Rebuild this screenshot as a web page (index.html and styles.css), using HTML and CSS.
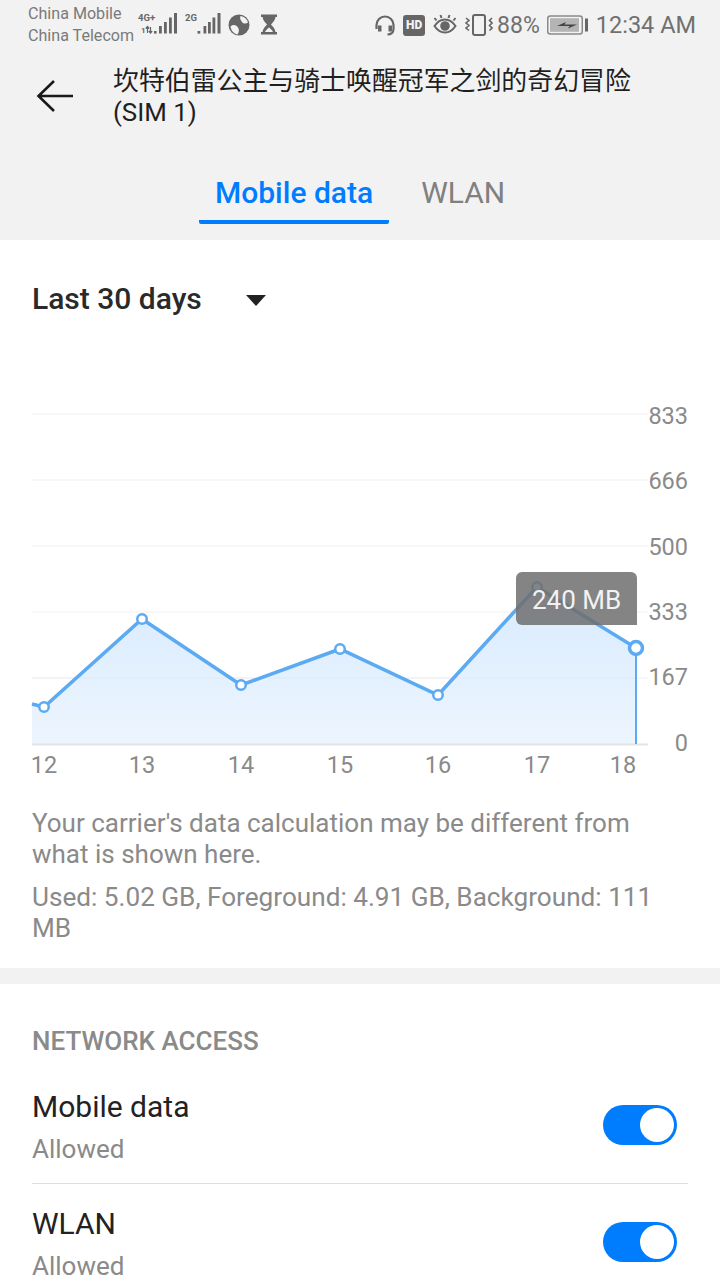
FILE: index.html
```html
<!DOCTYPE html>
<html lang="en">
<head>
<meta charset="utf-8">
<title>Data usage</title>
<link rel="stylesheet" href="styles.css">
</head>
<body>
<div class="screen">
  <header class="head">
    <div class="status">
      <div class="status-left">
        <div class="carriers"><span>China Mobile</span><span>China Telecom</span></div>
        <svg class="ic-signal" width="40" height="28" viewBox="0 0 40 28">
          <text x="0" y="11" class="sig-t">4G+</text>
          <text x="3" y="23" class="sig-t sig-s">1</text>
          <path d="M9.500 23v-6M7.800 18.500l1.700-2 1.700 2M12.500 17v6M10.800 21l1.700 2 1.700-2" fill="none" stroke="#666" stroke-width="1.200"/>
          <g fill="#666">
            <rect x="16" y="21" width="2.600" height="2.600"/><rect x="21" y="16" width="2.800" height="7.500"/><rect x="26" y="12" width="2.800" height="11.500"/><rect x="31" y="7.500" width="2.800" height="16"/><rect x="36" y="3" width="3" height="20.500"/>
          </g>
        </svg>
        <svg class="ic-signal2" width="36" height="28" viewBox="0 0 36 28">
          <text x="0" y="11" class="sig-t">2G</text>
          <g fill="#666">
            <rect x="12.500" y="21" width="2.800" height="2.600"/><rect x="18.500" y="16" width="2.800" height="7.500"/><rect x="23" y="12" width="2.800" height="11.500"/><rect x="27.500" y="7.500" width="2.800" height="16"/><rect x="32.500" y="3" width="3" height="20.500"/>
          </g>
        </svg>
        <svg class="ic-globe" width="22" height="22" viewBox="0 0 22 22">
          <circle cx="11" cy="11" r="10.500" fill="#666"/>
          <path d="M2.500 12.500c3-2.500 6-1.500 7.500 1s1 4.500-.5 7c-3.500-.5-6.500-4-7-8zM12.500 2c4 .5 6.500 3 7.500 6.500-2 1.500-4.500 1.500-6-.5s-2.500-4-1.500-6z" fill="#f2f2f2"/>
        </svg>
        <svg class="ic-glass" width="18" height="21" viewBox="0 0 18 21">
          <path d="M1 .5h16V3h-1.600c0 3-2.400 5.200-4.400 7.500 2 2.300 4.400 4.500 4.400 7.500H17v2.500H1V18h1.600c0-3 2.400-5.200 4.400-7.500C5 8.200 2.600 6 2.600 3H1z" fill="#666"/>
          <path d="M5 18h8c-.5-1.600-2.500-3-4-4.500C7.500 15 5.500 16.400 5 18z" fill="#f2f2f2"/>
        </svg>
      </div>
      <div class="status-right">
        <svg class="ic-head" width="22" height="22" viewBox="0 0 22 22" fill="none" stroke="#666" stroke-width="2.200">
          <path d="M2.500 15V11a8.500 8.500 0 0 1 17 0v4c0 3-2 5.500-6 5.500"/>
          <rect x="4.500" y="12" width="2.500" height="5" fill="#666" stroke-width="1"/><rect x="15" y="12" width="2.500" height="5" fill="#666" stroke-width="1"/>
        </svg>
        <span class="hd">HD</span>
        <svg class="ic-eye" width="24" height="20" viewBox="0 0 24 20" fill="none" stroke="#666" stroke-width="2">
          <path d="M1.500 12c3-4.500 7-6.500 10.500-6.500S19.500 7.500 22.500 12c-3 4.500-7 6.500-10.500 6.500S4.500 16.500 1.500 12z"/>
          <circle cx="12" cy="12" r="3.800" fill="#666"/>
          <path d="M3.500 6.500 1.500 4M8.500 4 7.500 1M15.500 4l1-3M20.500 6.500l2-2.500"/>
        </svg>
        <svg class="ic-vib" width="28" height="22" viewBox="0 0 28 22" fill="none" stroke="#666" stroke-width="2">
          <rect x="8" y="1" width="12" height="20" rx="2"/>
          <path d="M1 4l3 2.500-3 2.500 3 2.500-3 2.500 3 2.500M27 4l-2.500 2.500L27 9l-2.500 2.500L27 14l-2.500 2.500" stroke-width="1.600"/>
        </svg>
        <span class="pct">88%</span>
        <svg class="ic-batt" width="41" height="20" viewBox="0 0 41 20">
          <rect x=".75" y="1" width="34.500" height="18" rx="2.500" fill="#f2f2f2" stroke="#8a8a8a" stroke-width="1.500"/>
          <rect x="3" y="3.200" width="29" height="13.600" fill="#b4b4b4"/>
          <path d="M10 11l9-4-1.500 2.500H30l-9 4 1.500-2.500z" fill="#444"/>
          <rect x="38" y="3.500" width="3" height="13" fill="#666"/>
        </svg>
        <span class="time">12:34 AM</span>
      </div>
    </div>
    <div class="appbar">
      <svg class="back" width="38" height="34" viewBox="0 0 38 34" fill="none" stroke="#1a1a1a" stroke-width="2.600">
        <path d="M37 17H3M18 2 2.500 17 18 32"/>
      </svg>
      <h1 class="title">坎特伯雷公主与骑士唤醒冠军之剑的奇幻冒险 (SIM 1)</h1>
    </div>
    <nav class="tabs">
      <div class="tab active">Mobile data</div>
      <div class="tab">WLAN</div>
    </nav>
  </header>

  <section class="usage">
    <div class="range">
      <span class="range-label">Last 30 days</span>
      <span class="caret"></span>
    </div>
    <div class="chart">
      <svg class="chart-svg" width="720" height="400" viewBox="0 400 720 400">
        <defs>
          <linearGradient id="fill" x1="0" y1="0" x2="0" y2="1">
            <stop offset="0" stop-color="#d8ebfe"/>
            <stop offset="1" stop-color="#edf5fe"/>
          </linearGradient>
        </defs>
        <g stroke="#f5f5f5" stroke-width="1.500">
          <path d="M32 414H648M32 480H648M32 546H648M32 612H648M32 678H648"/>
        </g>
        <path d="M32 704 44 707 142 619 241 685 340 649 438 695 537 587 636 648V744H32z" fill="url(#fill)"/>
        <path d="M32 678H636" stroke="#000" stroke-opacity=".025" stroke-width="1.500"/>
        <path d="M32 744.500H648" stroke="#e2e4e6" stroke-width="2"/>
        <path d="M32 704 44 707 142 619 241 685 340 649 438 695 537 587 636 648" fill="none" stroke="#5caaf2" stroke-width="3.500"/>
        <path d="M636 648V744" stroke="#5caaf2" stroke-width="2"/>
        <g fill="#fff" stroke="#5caaf2" stroke-width="2.500">
          <circle cx="44" cy="707" r="4.750"/><circle cx="142" cy="619" r="4.750"/><circle cx="241" cy="685" r="4.750"/><circle cx="340" cy="649" r="4.750"/><circle cx="438" cy="695" r="4.750"/><circle cx="537" cy="587" r="4.750"/>
          <circle cx="636" cy="648" r="6.500" stroke-width="3.500"/>
        </g>
        <g class="y-labels" text-anchor="end">
          <text x="688" y="424">833</text><text x="688" y="489">666</text><text x="688" y="555">500</text><text x="688" y="620">333</text><text x="688" y="685">167</text><text x="688" y="751">0</text>
        </g>
        <g class="x-labels" text-anchor="middle">
          <text x="44" y="773">12</text><text x="142" y="773">13</text><text x="241" y="773">14</text><text x="340" y="773">15</text><text x="438" y="773">16</text><text x="537" y="773">17</text><text x="623" y="773">18</text>
        </g>
      </svg>
      <div class="tooltip">240 MB</div>
    </div>
    <p class="note">Your carrier's data calculation may be different from what is shown here.</p>
    <p class="note used">Used: 5.02 GB, Foreground: 4.91 GB, Background: 111 MB</p>
  </section>

  <div class="divider"></div>

  <section class="access">
    <h2 class="access-title">NETWORK ACCESS</h2>
    <div class="row">
      <div class="row-text"><div class="row-name">Mobile data</div><div class="row-sub">Allowed</div></div>
      <div class="switch"><span class="knob"></span></div>
    </div>
    <div class="row last">
      <div class="row-text"><div class="row-name">WLAN</div><div class="row-sub">Allowed</div></div>
      <div class="switch"><span class="knob"></span></div>
    </div>
  </section>
</div>
</body>
</html>
```
FILE: styles.css
```css
* { box-sizing: border-box; }
html, body { margin: 0; padding: 0; background: #fff; }
body { font-family: Roboto, "Noto Sans CJK SC", sans-serif; }
.screen { width: 720px; height: 1280px; overflow: hidden; }

.head { background: #f2f2f2; height: 240px; display: flex; flex-direction: column; }
.status { height: 48px; display: flex; justify-content: space-between; align-items: flex-start; padding: 3px 24px 0 28px; color: #666; }
.status-left { display: flex; align-items: flex-start; }
.carriers { display: flex; flex-direction: column; font-size: 16.100px; line-height: 22px; color: #7a7a7a; width: 110px; flex: none; }
.ic-signal { margin: 7px 0 0 0; flex: none; }
.ic-signal2 { margin: 7px 0 0 7px; flex: none; }
.ic-globe { margin: 11px 0 0 7px; flex: none; }
.ic-glass { margin: 11px 0 0 10px; flex: none; }
.sig-t { font-size: 9.500px; font-weight: 700; fill: #666; }
.sig-s { font-size: 8px; }
.status-right { display: flex; align-items: center; height: 44px; }
.status-right svg { flex: none; }
.hd { width: 22px; height: 21px; margin-left: 7px; border-radius: 3px; background: #666; color: #f2f2f2; font-size: 12px; font-weight: 900; line-height: 21px; text-align: center; }
.ic-eye { margin-left: 8px; margin-top: -2px; }
.ic-vib { margin-left: 8px; }
.pct { font-size: 23px; color: #707070; margin-left: 4px; }
.ic-batt { margin-left: 7px; }
.time { font-size: 23.500px; color: #707070; margin-left: 8px; }

.appbar { display: flex; align-items: flex-start; height: 128px; padding-left: 36px; padding-top: 18px; }
.back { flex: none; margin-top: 13px; }
.title { margin: 0 0 0 39px; width: 530px; font-size: 25.900px; font-weight: 400; line-height: 31px; color: #1f1f1f; }

.tabs { display: flex; justify-content: flex-start; padding-left: 199px; }
.tab { height: 48px; padding: 0 16px; font-size: 30px; line-height: 34px; color: #808080; margin-right: 16px; }
.tab.active { color: #007dff; font-weight: 500; border-bottom: 4px solid #007dff; border-radius: 0 0 2px 2px; }

.usage { height: 728px; padding-top: 38px; }
.range { display: flex; align-items: center; height: 40px; padding-left: 32px; }
.range-label { font-size: 30px; font-weight: 500; color: #2a2a2a; width: 214px; }
.caret { width: 0; height: 0; border-left: 10px solid transparent; border-right: 10px solid transparent; border-top: 11px solid #222; margin-top: 4px; }
.chart { position: relative; height: 408px; margin-top: 82px; }
.chart-svg { display: block; }
.y-labels text, .x-labels text { font-family: Roboto, sans-serif; font-size: 23.500px; fill: #8a8a8a; }
.tooltip { position: absolute; left: 516px; top: 172px; width: 121px; height: 53px; background: rgba(110,110,110,.85); border-radius: 6px 6px 0 6px; color: #f2f2f2; font-size: 26px; line-height: 56px; text-align: center; }
.note { margin: 0; padding: 0 32px; font-size: 26px; line-height: 31px; color: #8a8a8a; }
.used { margin-top: 12px; font-size: 26.150px; }

.divider { height: 16px; background: #f2f2f2; }
.access { padding: 40px 32px 0; }
.access-title { margin: 0 0 10px; font-size: 26px; font-weight: 500; line-height: 34px; color: #8a8a8a; }
.row { display: flex; justify-content: space-between; align-items: center; height: 116px; border-bottom: 1.500px solid #ddd; padding-right: 11px; }
.row.last { border-bottom: 0; height: 117px; }
.row-text { padding-top: 5px; }
.row-name { font-size: 30px; line-height: 36px; color: #222; }
.row-sub { font-size: 26px; line-height: 36px; color: #8a8a8a; margin-top: 6px; }
.switch { width: 74px; height: 40px; border-radius: 20px; background: #007dff; padding: 3px; display: flex; justify-content: flex-end; margin-top: -1px; }
.knob { width: 34px; height: 34px; border-radius: 50%; background: #fff; }
```
